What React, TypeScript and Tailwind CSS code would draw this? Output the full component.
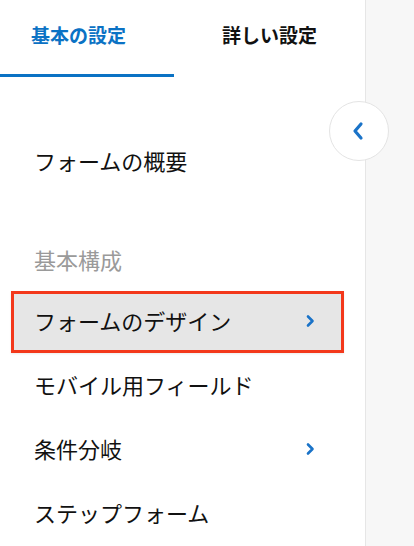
const font = { fontFamily: '"Noto Sans CJK JP", "Noto Sans", sans-serif' };

const Chevron = ({ className = "" }: { className?: string }) => (
  <svg viewBox="0 0 10 14" className={className} fill="none" stroke="currentColor" strokeWidth="2.6" strokeLinecap="round" strokeLinejoin="round">
    <path d="M3 2.5l4.5 4.5-4.5 4.5" />
  </svg>
);

const Row = ({ label, arrow }: { label: string; arrow?: boolean }) => (
  <div className="h-16 flex items-center justify-between pl-[34px] pr-[50px] pb-[3px]">
    <span className="text-[22px] text-[#111]">{label}</span>
    {arrow && <Chevron className="w-[10px] h-[14px] text-[#1a73c8]" />}
  </div>
);

export default function App() {
  return (
    <div className="relative flex w-[414px] h-[546px] overflow-hidden bg-white" style={font}>
      <div className="w-[366px] border-r border-[#e6e6e6] flex flex-col">
        <div className="flex h-[77px]">
          <div className="w-[174px] border-b-[3px] border-[#0b72c4] flex items-center pl-[31px] pb-[3px]">
            <span className="text-[19px] font-bold text-[#0b72c4]">基本の設定</span>
          </div>
          <div className="flex-1 flex items-center pl-[48px] pb-[6px]">
            <span className="text-[19px] font-bold text-[#111]">詳しい設定</span>
          </div>
        </div>
        <div className="mt-[53px]">
          <Row label="フォームの概要" />
        </div>
        <div className="h-[96px] flex items-end pl-[34px] pb-[14px]">
          <span className="text-[22px] text-[#9a9a9a]">基本構成</span>
        </div>
        <div className="h-16 flex items-center pl-[8px] pr-[21px]">
          <div className="flex-1 h-[62px] bg-[#e6e6e6] border-[3px] border-[#f3381b] flex items-center justify-between pl-[20px] pr-[26px] pb-[3px] ml-[3px] shadow-[0_1px_2px_rgba(0,0,0,0.08)]">
            <span className="text-[22px] text-[#111]">フォームのデザイン</span>
            <Chevron className="w-[10px] h-[14px] text-[#1a73c8]" />
          </div>
        </div>
        <Row label="モバイル用フィールド" />
        <Row label="条件分岐" arrow />
        <Row label="ステップフォーム" />
      </div>
      <div className="flex-1 bg-[#f7f7f7]" />
      <button className="absolute left-[329px] top-[101px] w-[60px] h-[60px] rounded-full bg-white border border-[#e4e4e4] flex items-center justify-center">
        <svg viewBox="0 0 12 20" className="w-[12px] h-[20px] text-[#1a73c8] mr-[2px]" fill="none" stroke="currentColor" strokeWidth="3.2" strokeLinecap="round" strokeLinejoin="round">
          <path d="M9 3L3 10l6 7" />
        </svg>
      </button>
    </div>
  );
}
